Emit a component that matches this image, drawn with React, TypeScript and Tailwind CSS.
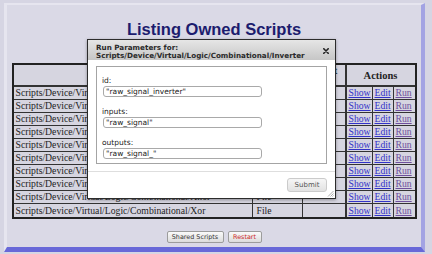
import React from "react";

const rows = [
  "Scripts/Device/Virtual/Logic/Combinational/And",
  "Scripts/Device/Virtual/Logic/Combinational/Buffer",
  "Scripts/Device/Virtual/Logic/Combinational/Decoder",
  "Scripts/Device/Virtual/Logic/Combinational/Encoder",
  "Scripts/Device/Virtual/Logic/Combinational/Inverter",
  "Scripts/Device/Virtual/Logic/Combinational/Multiplexer",
  "Scripts/Device/Virtual/Logic/Combinational/Nand",
  "Scripts/Device/Virtual/Logic/Combinational/Nor",
  "Scripts/Device/Virtual/Logic/Combinational/Xnor",
  "Scripts/Device/Virtual/Logic/Combinational/Xor",
];

const ui = { fontFamily: '"DejaVu Sans", Verdana, sans-serif' };
const serif = { fontFamily: '"Liberation Serif", "Times New Roman", serif' };

function Field({ label, value }: { label: string; value: string }) {
  return (
    <div className="flex flex-col">
      <div className="h-[9px] text-[7.5px] leading-[9px] text-[#222]">{label}</div>
      <div className="mt-[1px] ml-[1px] flex h-[11px] w-[159px] items-center rounded-[3px] border border-[#a9a9a9] bg-white pl-[2px] text-[7.5px] leading-[9px] text-[#222]">
        {value}
      </div>
    </div>
  );
}

export default function App() {
  return (
    <div className="relative h-[254px] w-[432px] overflow-hidden bg-[#d6d5e3] pl-[4px] pt-[3px]">
      <div
        className="flex h-[249px] w-[421px] flex-col items-center border-b-[5px] border-l-[3px] border-r-[4px] border-t-[2px] border-b-[#6868d8] border-l-[#e6e5ef] border-r-[#a3a3e3] border-t-[#e6e5ef] bg-[#dad9e6]"
      >
        <h1
          className="mt-[14px] h-[20px] text-[16.5px] font-bold leading-[20px] text-[#1c1c6e]"
          style={{ fontFamily: '"Liberation Sans", Arial, sans-serif' }}
        >
          Listing Owned Scripts
        </h1>

        <table
          className="mt-[24px] w-[405px] table-fixed border-separate border-spacing-0 border-2 border-[#222] bg-[#d6d5e0] text-[9.7px] text-[#222]"
          style={serif}
        >
          <colgroup>
            <col className="w-[239px]" />
            <col className="w-[50px]" />
            <col className="w-[44px]" />
            <col className="w-[26px]" />
            <col className="w-[21px]" />
            <col className="w-[21px]" />
          </colgroup>
          <thead>
            <tr>
              <th className="h-[22px] border-b-2 border-r border-[#333] p-0 text-[10.5px] font-bold leading-[9px]">Name</th>
              <th className="h-[22px] border-b-2 border-r border-[#333] p-0 text-[10.5px] font-bold leading-[9px]">Type</th>
              <th className="h-[22px] border-b-2 border-r-2 border-[#333] p-0 text-[10.5px] font-bold leading-[9px]">
                Script
                <br />
                Args
              </th>
              <th colSpan={3} className="h-[22px] border-b-2 border-[#333] p-0 text-[10.5px] font-bold leading-[9px]">
                Actions
              </th>
            </tr>
          </thead>
          <tbody>
            {rows.map((r, i) => {
              const last = i === rows.length - 1;
              const b = last ? "" : "border-b";
              return (
                <tr key={r}>
                  <td className={`h-[13px] overflow-hidden whitespace-nowrap border-r ${b} border-[#333] p-0 pl-[2px] leading-[12px]`}>{r}</td>
                  <td className={`h-[13px] border-r ${b} border-[#333] p-0 pl-[4px] leading-[12px]`}>File</td>
                  <td className={`h-[13px] border-r-2 ${b} border-[#333] p-0 leading-[12px]`}></td>
                  <td className={`h-[13px] border-r ${b} border-[#333] p-0 pl-[2px] leading-[12px]`}>
                    <a className="text-[#3232c8] underline">Show</a>
                  </td>
                  <td className={`h-[13px] border-r ${b} border-[#333] p-0 pl-[2px] leading-[12px]`}>
                    <a className="text-[#3232c8] underline">Edit</a>
                  </td>
                  <td className={`h-[13px] ${b} border-[#333] p-0 pl-[2px] leading-[12px]`}>
                    <a className="text-[#6e4f9c] underline">Run</a>
                  </td>
                </tr>
              );
            })}
          </tbody>
        </table>

        <div className="mt-[12px] flex gap-[4px]" style={ui}>
          <button className="flex h-[12px] w-[57px] items-center justify-center rounded-[2px] border border-[#9c9c9c] bg-gradient-to-b from-[#fafafa] to-[#dcdcdc] text-[6.4px] leading-[8px] text-[#333]">
            Shared Scripts
          </button>
          <button className="flex h-[12px] w-[34px] items-center justify-center rounded-[2px] border border-[#9c9c9c] bg-gradient-to-b from-[#fafafa] to-[#dcdcdc] text-[6.4px] leading-[8px] text-[#cc2a2a]">
            Restart
          </button>
        </div>
      </div>

      {/* Modal dialog */}
      <div
        className="absolute left-[87px] top-[39px] flex h-[160px] w-[249px] flex-col border border-[#2c2c2c] bg-white shadow-[0_1px_3px_rgba(0,0,0,0.35)]"
        style={ui}
      >
        <div className="flex h-[20px] items-start justify-between bg-gradient-to-b from-[#e6e6e6] to-[#c6c6c6] pl-[8px] pr-[6px] pt-[4px]">
          <div className="text-[7.2px] font-bold leading-[8px] text-[#2a2a2a]">
            Run Parameters for:
            <br />
            Scripts/Device/Virtual/Logic/Combinational/Inverter
          </div>
          <svg className="mt-[4px]" width="6" height="6" viewBox="0 0 6 6">
            <path d="M0.8 0.8 L5.2 5.2 M5.2 0.8 L0.8 5.2" stroke="#222" strokeWidth="1.6" strokeLinecap="round" />
          </svg>
        </div>
        <div className="px-[8px] pb-[7px] pt-[6px]">
          <div className="flex h-[98px] flex-col gap-[10px] border border-[#a4a4a4] pl-[5px] pt-[9px]">
            <Field label="id:" value={'"raw_signal_inverter"'} />
            <Field label="inputs:" value={'"raw_signal"'} />
            <Field label="outputs:" value={'"raw_signal_"'} />
          </div>
        </div>
        <div className="relative flex flex-1 justify-end border-t border-[#dedede] pr-[8px] pt-[6px]">
          <button className="flex h-[14px] w-[40px] items-center justify-center rounded-[3px] border border-[#cbcbcb] bg-gradient-to-b from-[#f6f6f6] to-[#e2e2e2] text-[7px] leading-[8px] text-[#555]">
            Submit
          </button>
          <svg className="absolute bottom-[1px] right-[1px]" width="7" height="7" viewBox="0 0 7 7">
            <path d="M6.5 1 L1 6.5 M6.5 3.5 L3.5 6.5 M6.5 5.5 L5.5 6.5" stroke="#8a8a8a" strokeWidth="0.7" />
          </svg>
        </div>
      </div>
    </div>
  );
}
